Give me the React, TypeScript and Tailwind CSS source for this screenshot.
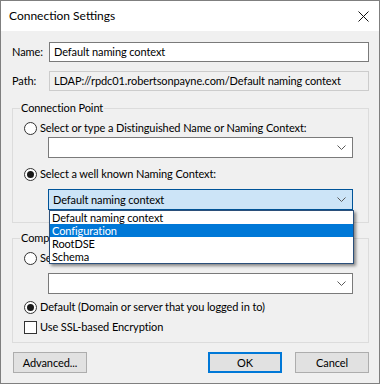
import React from "react";

const font = { fontFamily: '"Segoe UI", Lato, "Liberation Sans", sans-serif' };

function Chevron() {
  return (
    <svg width="9" height="5" viewBox="0 0 9 5" className="block">
      <path d="M0.5 0.5 L4.5 4.5 L8.5 0.5" fill="none" stroke="#5a5a5a" strokeWidth="1" />
    </svg>
  );
}

function Radio({ checked, label }: { checked?: boolean; label: string }) {
  return (
    <div className="flex h-[16px] items-center">
      <div className="flex h-[13px] w-[13px] shrink-0 items-center justify-center rounded-full border border-[#333333] bg-white">
        {checked && <div className="h-[7px] w-[7px] rounded-full bg-[#1a1a1a]" />}
      </div>
      <span className="ml-[3px] whitespace-nowrap">{label}</span>
    </div>
  );
}

function Combo({ focused, text }: { focused?: boolean; text?: string }) {
  return (
    <div
      className={
        "flex h-[21px] w-[305px] items-center justify-between border pl-[4px] pr-[6px] " +
        (focused ? "border-[#005499] bg-[#cce4f7]" : "border-[#7a7a7a] bg-white")
      }
    >
      <span className="whitespace-nowrap">{text}</span>
      <Chevron />
    </div>
  );
}

export default function App() {
  return (
    <div
      className="relative flex h-[384px] w-[380px] flex-col overflow-hidden border border-[#7f7f7f] text-[11px] leading-[16px] tracking-[-0.1px] text-black"
      style={font}
    >
      <div className="flex h-[30px] items-center justify-between bg-white pl-[8px] pr-[10px]">
        <span className="text-[12px] tracking-normal">Connection Settings</span>
        <svg width="11" height="11" viewBox="0 0 11 11">
          <path d="M0.5 0.5 L10.5 10.5 M10.5 0.5 L0.5 10.5" stroke="#111" strokeWidth="1" />
        </svg>
      </div>
      <div className="relative flex flex-1 flex-col bg-[#f0f0f0]">
        {/* Name */}
        <div className="mt-[11px] flex items-center">
          <span className="w-[48px] pl-[11px]">Name:</span>
          <div className="flex h-[20px] w-[320px] items-center border border-[#7a7a7a] bg-white pl-[4px]">
            Default naming context
          </div>
        </div>
        {/* Path */}
        <div className="mt-[9px] flex items-center">
          <span className="w-[48px] pl-[11px]">Path:</span>
          <div className="flex h-[20px] w-[320px] items-center overflow-hidden whitespace-nowrap border border-[#cccccc] bg-[#f0f0f0] pl-[4px]">
            LDAP://rpdc01.robertsonpayne.com/Default naming context
          </div>
        </div>
        {/* Connection Point group */}
        <div className="relative ml-[11px] mt-[17px] h-[115px] w-[357px] border border-[#dcdcdc]">
          <span className="absolute -top-[9px] left-[7px] bg-[#f0f0f0] px-[1px]">Connection Point</span>
          <div className="ml-[11px] mt-[11px]">
            <Radio label="Select or type a Distinguished Name or Naming Context:" />
          </div>
          <div className="ml-[35px] mt-[1px]">
            <Combo />
          </div>
          <div className="ml-[11px] mt-[8px]">
            <Radio checked label="Select a well known Naming Context:" />
          </div>
          <div className="ml-[35px] mt-[7px]">
            <Combo focused text="Default naming context" />
          </div>
        </div>
        {/* Computer group */}
        <div className="relative ml-[11px] mt-[15px] h-[105px] w-[357px] border border-[#dcdcdc]">
          <span className="absolute -top-[9px] left-[7px] bg-[#f0f0f0] px-[1px]">Computer</span>
          <div className="ml-[11px] mt-[11px] w-[300px] overflow-hidden">
            <Radio label="Select or type a domain or server:" />
          </div>
          <div className="ml-[35px] mt-[7px]">
            <Combo />
          </div>
          <div className="ml-[11px] mt-[5px]">
            <Radio checked label="Default (Domain or server that you logged in to)" />
          </div>
          <div className="ml-[11px] mt-[4px] flex h-[16px] items-center">
            <div className="h-[13px] w-[13px] border border-[#333333] bg-white" />
            <span className="ml-[3px]">Use SSL-based Encryption</span>
          </div>
        </div>
        {/* Buttons */}
        <div className="mt-[9px] flex">
          <button className="ml-[12px] h-[21px] w-[74px] border border-[#adadad] bg-[#e1e1e1]">Advanced...</button>
          <button className="ml-[121px] h-[21px] w-[74px] border-2 border-[#0078d7] bg-[#e1e1e1]">OK</button>
          <button className="ml-[13px] h-[21px] w-[74px] border border-[#adadad] bg-[#e1e1e1]">Cancel</button>
        </div>
        {/* Dropdown list overlay */}
        <div className="absolute left-[48px] top-[179px] w-[305px] border border-[#2b4f7a] bg-white shadow-[2px_2px_3px_rgba(0,0,0,0.45)]">
          <div className="h-[13px] pl-[2px] leading-[13px]">Default naming context</div>
          <div className="h-[13px] bg-[#0078d7] pl-[2px] leading-[13px] text-white">Configuration</div>
          <div className="h-[13px] pl-[2px] leading-[13px]">RootDSE</div>
          <div className="h-[13px] pl-[2px] leading-[13px]">Schema</div>
        </div>
      </div>
    </div>
  );
}
